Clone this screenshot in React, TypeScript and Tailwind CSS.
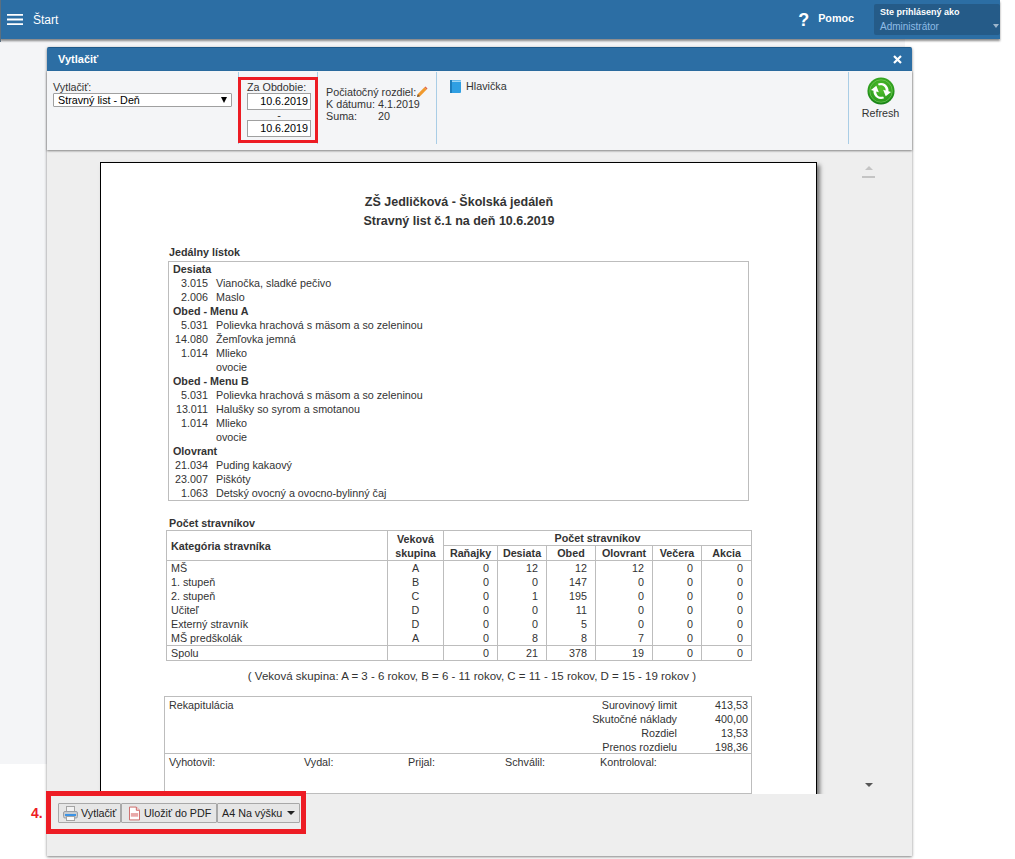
import React from "react";

type MenuRow = { h?: string; c?: string; n?: string };
const menu: MenuRow[] = [
  { h: "Desiata" },
  { c: "3.015", n: "Vianočka, sladké pečivo" },
  { c: "2.006", n: "Maslo" },
  { h: "Obed - Menu A" },
  { c: "5.031", n: "Polievka hrachová s mäsom a so zeleninou" },
  { c: "14.080", n: "Žemľovka jemná" },
  { c: "1.014", n: "Mlieko" },
  { c: "", n: "ovocie" },
  { h: "Obed - Menu B" },
  { c: "5.031", n: "Polievka hrachová s mäsom a so zeleninou" },
  { c: "13.011", n: "Halušky so syrom a smotanou" },
  { c: "1.014", n: "Mlieko" },
  { c: "", n: "ovocie" },
  { h: "Olovrant" },
  { c: "21.034", n: "Puding kakaový" },
  { c: "23.007", n: "Piškóty" },
  { c: "1.063", n: "Detský ovocný a ovocno-bylinný čaj" },
];

const rows: (string | number)[][] = [
  ["MŠ", "A", 0, 12, 12, 12, 0, 0],
  ["1. stupeň", "B", 0, 0, 147, 0, 0, 0],
  ["2. stupeň", "C", 0, 1, 195, 0, 0, 0],
  ["Učiteľ", "D", 0, 0, 11, 0, 0, 0],
  ["Externý stravník", "D", 0, 0, 5, 0, 0, 0],
  ["MŠ predškolák", "A", 0, 8, 8, 7, 0, 0],
];
const meals = ["Raňajky", "Desiata", "Obed", "Olovrant", "Večera", "Akcia"];
const totals = [0, 21, 378, 19, 0, 0];
const recap = [
  ["Surovinový limit", "413,53"],
  ["Skutočné náklady", "400,00"],
  ["Rozdiel", "13,53"],
  ["Prenos rozdielu", "198,36"],
];

const th = "border border-[#bdbdbd] p-0 font-bold text-center";
const td = "border-x border-[#bdbdbd] p-0 pr-[8px] text-right h-[14px] leading-[14px]";

function RefreshIcon() {
  return (
    <svg width="28" height="28" viewBox="0 0 30 30">
      <defs>
        <radialGradient id="rg" cx="50%" cy="40%" r="62%">
          <stop offset="0" stopColor="#55c22e" />
          <stop offset="0.72" stopColor="#2f9f1e" />
          <stop offset="1" stopColor="#0f7a14" />
        </radialGradient>
      </defs>
      <circle cx="15" cy="15" r="14.500" fill="url(#rg)" />
      <circle cx="15" cy="15" r="12" fill="none" stroke="#9be07a" strokeOpacity="0.5" strokeWidth="1" />
      <g transform="rotate(60 15 15)">
        <path d="M6.500 14c.6-4.600 4.400-7.600 8.600-7.300 1.600.1 3 .6 4.200 1.500l2-2 1 7.200-7.200-1 2-2c-2.800-2-7.500-1-8.300 3.600z" fill="#fff" />
        <path d="M23.500 16c-.6 4.600-4.400 7.600-8.600 7.300-1.600-.1-3-.6-4.200-1.500l-2 2-1-7.200 7.200 1-2 2c2.800 2 7.500 1 8.300-3.600z" fill="#fff" />
      </g>
    </svg>
  );
}

function PrinterIcon() {
  return (
    <svg width="15" height="15" viewBox="0 0 15 15">
      <rect x="3.500" y="0.500" width="8" height="5" fill="#f2f2f2" stroke="#a4a4a4" />
      <rect x="0.500" y="5.500" width="14" height="6.500" rx="1.500" fill="#c8ccd0" stroke="#9a9ea4" />
      <rect x="2" y="8" width="11" height="2" fill="#3b93e6" />
      <rect x="3.500" y="10.500" width="8" height="4" fill="#fafafa" stroke="#a4a4a4" />
    </svg>
  );
}

function PdfIcon() {
  return (
    <svg width="11" height="15" viewBox="0 0 12 15">
      <path d="M.5.500h7.500l3.500 3.500v10.500h-11z" fill="#fff" stroke="#c9605f" />
      <path d="M8 .5v3.500h3.500" fill="#f3d6d6" stroke="#c9605f" />
      <rect x="2" y="7" width="8" height="4" fill="#e9a8a8" />
    </svg>
  );
}

function PencilIcon() {
  return (
    <svg width="12" height="12" viewBox="0 0 12 12">
      <path d="M1 11l.8-3L8.500 1.300l2.200 2.200L4 10.200z" fill="#f09a2e" />
      <path d="M8.500 1.300l1-.8 2 2-.8 1z" fill="#e0614a" />
      <path d="M1 11l.8-3 2.200 2.200z" fill="#7a5a3a" />
    </svg>
  );
}

function BookIcon() {
  return (
    <svg width="11" height="13" viewBox="0 0 11 13">
      <rect x="0" y="0" width="11" height="13" rx="1" fill="#2f9fe3" />
      <rect x="0" y="0" width="2" height="13" fill="#1c7dbd" />
      <rect x="2" y="0.500" width="9" height="1.500" fill="#9fd6f5" />
    </svg>
  );
}

function App() {
  return (
    <div className="relative w-[1015px] h-[859px] overflow-hidden bg-white font-['Liberation_Sans',Arial,sans-serif] text-[10.75px] text-[#333333]">
      {/* top bar */}
      <header className="w-[1000px] h-[39px] bg-[#2c6ea4] shadow-[0_2px_2px_rgba(0,0,0,0.45)] flex items-center text-white relative z-10">
        <svg width="16" height="11" viewBox="0 0 16 11" className="ml-[7px]">
          <path d="M0 .9h16M0 5.500h16M0 10.100h16" stroke="#fff" strokeWidth="1.800" />
        </svg>
        <span className="ml-[10px] text-[12px]">Štart</span>
        <span className="ml-auto text-[18px] font-bold leading-none">?</span>
        <span className="ml-[9px] mb-[2px] text-[10.75px] font-bold">Pomoc</span>
        <div className="relative ml-[20px] w-[126px] h-[31px] bg-[#255b88] rounded-[2px] pl-[6px] pt-[2px] leading-[13px] text-[10px]">
          <div className="font-bold text-white text-[9px]">Ste prihlásený ako</div>
          <div className="text-[#8fbce6] mt-[1px]">Administrátor</div>
          <span className="absolute right-[1px] top-[20px] w-0 h-0 border-x-[3.500px] border-x-transparent border-t-[4px] border-t-[#9db6cc]" />
        </div>
      </header>
      <div className="absolute left-0 top-0 w-[1px] h-[42px] bg-[#5b6f80] z-10" />
      <div className="w-[905px] h-[725px] bg-[#f4f5f7]" />

      {/* modal window */}
      <section className="absolute left-[47px] top-[47px] w-[865px] h-[809px] flex flex-col bg-[#eeeeee] rounded-t-[2px] shadow-[0_1px_3px_rgba(0,0,0,0.5)] z-20">
        <div className="h-[24px] shrink-0 bg-[#2c6ea4] border-t border-[#1f5a8a] flex items-center justify-between pl-[11px] pr-[10px] text-white font-bold rounded-t-[2px]">
          <span className="text-[11px]">Vytlačiť</span>
          <svg width="9" height="9" viewBox="0 0 9 9">
            <path d="M1 1l7 7M8 1l-7 7" stroke="#fff" strokeWidth="2.200" />
          </svg>
        </div>

        <div className="h-[79px] shrink-0 bg-[#f4f5f7] shadow-[0_1px_2px_rgba(0,0,0,0.45)] flex items-start pt-[1px] leading-[12px] relative z-10">
          <div className="w-[192px] h-[72px] border-r border-[#a9cde6] pl-[6px] pt-[10px] leading-[11px]">
            <div>Vytlačiť:</div>
            <div className="w-[179px] h-[14px] border border-[#a0a0a0] rounded-[1px] bg-white flex items-center justify-between pl-[4px] pr-[4px] text-black">
              <span>Stravný list - Deň</span>
              <span className="w-0 h-0 border-x-[3.500px] border-x-transparent border-t-[6px] border-t-black" />
            </div>
          </div>
          <div className="w-[79px] h-[72px] border-r border-[#a9cde6] pl-[8px] pt-[9px]">
            <div className="leading-[12px]">Za Obdobie:</div>
            <div className="w-[64px] h-[17px] border border-[#a0a0a0] bg-white text-right pr-[2px] leading-[15px] text-black">10.6.2019</div>
            <div className="w-[64px] text-center leading-[10px]">-</div>
            <div className="w-[64px] h-[17px] border border-[#a0a0a0] bg-white text-right pr-[2px] leading-[15px] text-black">10.6.2019</div>
          </div>
          <div className="w-[119px] h-[72px] border-r border-[#a9cde6] pl-[8px] pt-[14px]">
            <div className="flex items-center">Počiatočný rozdiel:<PencilIcon /></div>
            <div className="flex"><span className="w-[52px]">K dátumu:</span><span>4.1.2019</span></div>
            <div className="flex"><span className="w-[52px]">Suma:</span><span>20</span></div>
          </div>
          <div className="w-[412px] h-[72px] border-r border-[#a9cde6] pl-[13px] pt-[8px] flex items-start gap-[5px]">
            <BookIcon />
            <span>Hlavička</span>
          </div>
          <div className="flex-1 flex flex-col items-center pt-[5px]">
            <RefreshIcon />
            <span className="mt-[2px] text-[#333]">Refresh</span>
          </div>
        </div>

        <div className="h-[644px] shrink-0 flex items-start pl-[53px] pt-[12px]">
          <div className="w-[717px] h-[632px] bg-white border-x border-t border-black shadow-[3px_3px_4px_rgba(0,0,0,0.5)] overflow-hidden pt-[30px] pl-[63px]">
            <div className="w-[590px] text-center font-bold text-[12.500px] leading-[19px] text-[#333]">
              <div>ZŠ Jedličková - Školská jedáleň</div>
              <div>Stravný list č.1 na deň 10.6.2019</div>
            </div>
            <div className="ml-[5px] mt-[14px] font-bold leading-[14px]">Jedálny lístok</div>
            <div className="ml-[4px] mt-[2px] w-[581px] h-[240px] border border-[#bdbdbd] pl-[4px] leading-[14px]">
              {menu.map((r, i) =>
                r.h ? (
                  <div key={i} className="h-[14px] font-bold">{r.h}</div>
                ) : (
                  <div key={i} className="h-[14px] flex">
                    <span className="w-[35px] text-right">{r.c}</span>
                    <span className="ml-[8px]">{r.n}</span>
                  </div>
                )
              )}
            </div>
            <div className="ml-[5px] mt-[15px] font-bold leading-[14px]">Počet stravníkov</div>
            <table className="ml-[2px] w-[585px] table-fixed border-collapse leading-[14px]">
              <colgroup>
                <col className="w-[221px]" />
                <col className="w-[56px]" />
                <col className="w-[54px]" />
                <col className="w-[49px]" />
                <col className="w-[49px]" />
                <col className="w-[57px]" />
                <col className="w-[49px]" />
                <col className="w-[50px]" />
              </colgroup>
              <thead>
                <tr className="h-[15px]">
                  <th rowSpan={2} className={th + " text-left pl-[4px]"}>Kategória stravníka</th>
                  <th rowSpan={2} className={th}>Veková<br />skupina</th>
                  <th colSpan={6} className={th}>Počet stravníkov</th>
                </tr>
                <tr className="h-[15px]">
                  {meals.map((m) => (
                    <th key={m} className={th}>{m}</th>
                  ))}
                </tr>
              </thead>
              <tbody>
                {rows.map((r, i) => (
                  <tr key={i}>
                    <td className="border-x border-[#bdbdbd] p-0 pl-[4px] h-[14px] leading-[14px]">{r[0]}</td>
                    <td className="border-x border-[#bdbdbd] p-0 text-center h-[14px] leading-[14px]">{r[1]}</td>
                    {r.slice(2).map((v, j) => (
                      <td key={j} className={td}>{v}</td>
                    ))}
                  </tr>
                ))}
                <tr className="h-[15px]">
                  <td className="border border-[#bdbdbd] p-0 pl-[4px]">Spolu</td>
                  <td className="border border-[#bdbdbd] p-0" />
                  {totals.map((v, j) => (
                    <td key={j} className="border border-[#bdbdbd] p-0 pr-[8px] text-right">{v}</td>
                  ))}
                </tr>
              </tbody>
            </table>
            <div className="w-[616px] mt-[8px] text-center text-[11.500px] leading-[14px]">( Veková skupina: A = 3 - 6 rokov, B = 6 - 11 rokov, C = 11 - 15 rokov, D = 15 - 19 rokov )</div>
            <div className="mt-[13px] w-[588px] border border-[#bdbdbd] h-[98px]">
              <div className="h-[57px] border-b border-[#bdbdbd] pl-[4px] pt-[1px] flex justify-between leading-[14px]">
                <span>Rekapitulácia</span>
                <div className="pr-[3px]">
                  {recap.map(([l, v]) => (
                    <div key={l} className="flex h-[14px]">
                      <span className="w-[150px] text-right">{l}</span>
                      <span className="w-[71px] text-right">{v}</span>
                    </div>
                  ))}
                </div>
              </div>
              <div className="pl-[4px] pt-[1px] flex leading-[14px]">
                <span className="w-[135px]">Vyhotovil:</span>
                <span className="w-[104px]">Vydal:</span>
                <span className="w-[97px]">Prijal:</span>
                <span className="w-[95px]">Schválil:</span>
                <span>Kontroloval:</span>
              </div>
            </div>
          </div>
          <div className="ml-[45px] mt-[4px] h-[621px] flex flex-col items-center justify-between">
            <div className="flex flex-col items-center">
              <span className="w-0 h-0 border-x-[4px] border-x-transparent border-b-[4px] border-b-[#c4c4c4]" />
              <span className="w-[13px] h-[2px] bg-[#c4c4c4] mt-[6px]" />
            </div>
            <span className="w-0 h-0 border-x-[4px] border-x-transparent border-t-[4px] border-t-[#555]" />
          </div>
        </div>

        <div className="flex-1 pl-[11px] pt-[9px] bg-[#eeeeee] relative z-10">
          <div className="flex h-[20px] text-[#222]">
            <div className="w-[63px] border border-[#a8a8a8] rounded-[1px] bg-[#e6e6e6] flex items-center pl-[4px] gap-[3px]"><PrinterIcon />Vytlačiť</div>
            <div className="w-[96px] border border-[#a8a8a8] rounded-[1px] bg-[#e6e6e6] flex items-center pl-[7px] gap-[4px]"><PdfIcon />Uložiť do PDF</div>
            <div className="w-[83px] border border-[#a8a8a8] rounded-[1px] bg-[#e6e6e6] flex items-center pl-[4px] gap-[5px]">A4 Na výšku<span className="w-0 h-0 border-x-[4px] border-x-transparent border-t-[4px] border-t-[#222]" /></div>
          </div>
        </div>
      </section>

      {/* annotations over the picture */}
      <div className="absolute left-[238px] top-[77px] w-[80px] h-[66px] border-[3px] border-[#ed1c24] z-30" />
      <div className="absolute left-[46px] top-[791px] w-[260px] h-[43px] border-[5px] border-[#ed1c24] z-30" />
      <div className="absolute left-[31px] top-[804px] text-[14px] leading-[18px] font-bold text-[#ed1c24] z-30">4.</div>
    </div>
  );
}

export default App;
